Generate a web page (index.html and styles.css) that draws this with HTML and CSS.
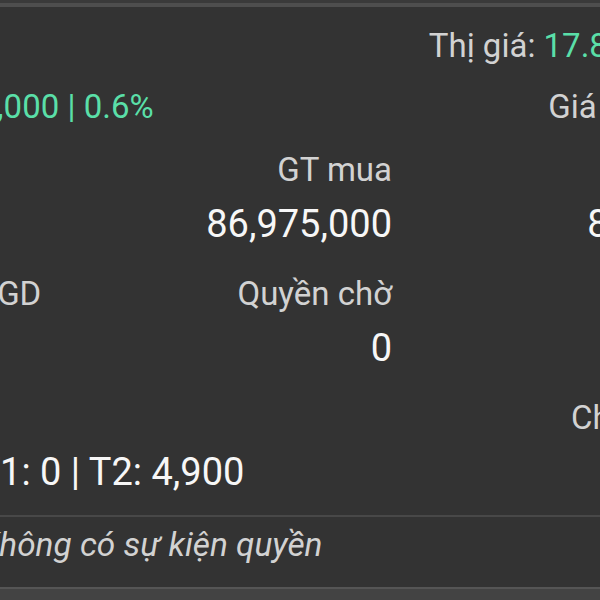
FILE: index.html
```html
<!DOCTYPE html>
<html lang="vi">
<head>
<meta charset="utf-8">
<title>Chi tiết danh mục</title>
<link rel="stylesheet" href="styles.css">
</head>
<body>
<div class="screen">
  <div class="top-band"></div>
  <div class="panel">
    <div class="header">
      <div class="hrow">
        <span class="code">ACB</span>
        <span class="label">Thị giá: <span class="green">17.850</span></span>
      </div>
      <div class="hrow">
        <span class="pl"><span class="label">Lãi:</span><span class="green">+522,000 | 0.6%</span></span>
        <span class="label">Giá TC</span>
      </div>
    </div>
    <div class="grid">
      <div class="cell c1"><span class="label">Giá vốn</span><span class="value">17,750</span></div>
      <div class="cell c2"><span class="label">GT mua</span><span class="value">86,975,000</span></div>
      <div class="cell c3"><span class="label">GT hiện tại</span><span class="value">87,497,000</span></div>

      <div class="cell c1"><span class="label">KL được GD</span><span class="value">4,900</span></div>
      <div class="cell c2"><span class="label">Quyền chờ</span><span class="value">0</span></div>
      <div class="cell c3"><span class="label">Lãi/lỗ</span><span class="value">522,000</span></div>

      <div class="cell c1"><span class="label">Chờ về</span><span class="value">T0: 0 | T1: 0 | T2: 4,900</span></div>
      <div class="cell c2"><span class="label"></span><span class="value"></span></div>
      <div class="cell c3"><span class="label">Chờ khớp bán</span><span class="value">0</span></div>
    </div>
  </div>
  <div class="rights">
    <p class="empty">Không có sự kiện quyền</p>
  </div>
  <div class="bottom-band"></div>
</div>
</body>
</html>
```

FILE: styles.css
```css
html, body {
  margin: 0;
  padding: 0;
  background: #333333;
}

.screen {
  width: 600px;
  height: 600px;
  overflow: hidden;
  background: #333333;
  font-family: Roboto, "Noto Sans", sans-serif;
  display: flex;
  flex-direction: column;
}

.top-band {
  height: 3px;
  background: #3a3a3a;
  border-bottom: 4px solid #4e4e4e;
  flex: none;
}

.panel {
  margin-left: -134px;
  width: 907px;
  padding-top: 17px;
  flex: none;
}

.label {
  font-size: 33px;
  line-height: 44px;
  color: #d2d2d2;
  white-space: nowrap;
}

.value {
  font-size: 38px;
  line-height: 52px;
  color: #f7f7f7;
  white-space: nowrap;
}

.green {
  color: #5adfa8;
}

.header {
  display: flex;
  flex-direction: column;
  gap: 17px;
  width: 779px;
}

.hrow {
  display: flex;
  justify-content: space-between;
  align-items: center;
  height: 44px;
  font-size: 33px;
  line-height: 44px;
  white-space: nowrap;
}

.pl {
  display: inline-flex;
  gap: 5px;
}

.code {
  font-size: 36px;
  font-weight: 700;
  color: #f7f7f7;
}

.grid {
  display: grid;
  grid-template-columns: 263px 263px 381px;
  row-gap: 22px;
  margin-top: 19px;
}

.cell {
  display: flex;
  flex-direction: column;
  gap: 6px;
  min-height: 102px;
}

.cell .label {
  height: 44px;
}

.cell .value {
  height: 52px;
}

.c1 {
  align-items: flex-start;
}

.c2,
.c3 {
  align-items: flex-end;
}

.rights {
  margin-top: 17px;
  border-top: 2px solid #484848;
  padding: 6px 0 0;
  margin-left: -21px;
  flex: 1;
}

.empty {
  margin: 0;
  font-size: 33.4px;
  line-height: 44px;
  font-style: italic;
  color: #d2d2d2;
  white-space: nowrap;
}

.bottom-band {
  flex: none;
  height: 11px;
  background: #434343;
  border-top: 2px solid #555555;
}
```
